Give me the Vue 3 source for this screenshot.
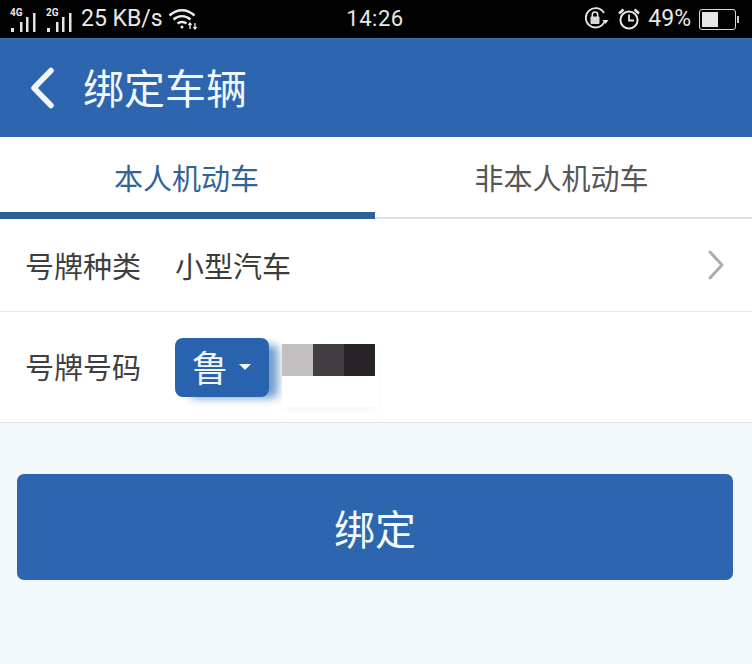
<script setup>
const cells = ['#c2bfc0', '#433e42', '#272326']
</script>

<template>
  <div class="page">
    <div class="status">
      <div class="st-left">
        <svg class="signal" width="26" height="26" viewBox="0 0 26 26">
          <text x="0" y="9" class="tiny">4G</text>
          <g fill="#e4e4e4">
            <rect x="1" y="21" width="3" height="4" />
            <rect x="10" y="15" width="2.500" height="10" />
            <rect x="16" y="10" width="2.500" height="15" />
            <rect x="23" y="6" width="2.500" height="19" />
          </g>
        </svg>
        <svg class="signal" width="26" height="26" viewBox="0 0 26 26">
          <text x="0" y="9" class="tiny">2G</text>
          <g fill="#e4e4e4">
            <rect x="1" y="21" width="3" height="4" />
            <rect x="10" y="15" width="2.500" height="10" />
            <rect x="16" y="10" width="2.500" height="15" />
            <rect x="23" y="6" width="2.500" height="19" />
          </g>
        </svg>
        <span class="speed">25 KB/s</span>
        <svg width="30" height="22" viewBox="0 0 30 22" fill="none" stroke="#ededed" stroke-width="2.400">
          <path d="M1.500 7.500C9 .5 19 .5 26.500 7.500" />
          <path d="M5.500 11.500C10.500 7 17.500 7 22.500 11.500" />
          <path d="M9.500 15.500C12 13.500 16 13.500 18.500 15.500" />
          <circle cx="14" cy="19" r="1.500" fill="#ededed" stroke="none" />
          <path d="M22 21v-6M20.500 17l1.500-2 1.500 2M27 15v6M25.500 19l1.500 2 1.500-2" stroke-width="1.300" />
        </svg>
      </div>
      <div class="clock">14:26</div>
      <div class="st-right">
        <svg width="26" height="24" viewBox="0 0 26 24" fill="none" stroke="#e8e8e8" stroke-width="1.800">
          <path d="M20.500 14.500A9.700 9.700 0 1 1 20 6" />
          <path d="M18.500 13h6l-3 4z" fill="#e8e8e8" stroke="none" />
          <rect x="6.500" y="9.500" width="9" height="7.500" rx="1" fill="#d8d8d8" stroke="none" />
          <path d="M8.300 10V7.800a2.700 2.700 0 0 1 5.400 0V10" stroke-width="1.500" />
        </svg>
        <svg width="24" height="24" viewBox="0 0 24 24" fill="none" stroke="#e8e8e8" stroke-width="2">
          <circle cx="12" cy="13" r="8.600" />
          <path d="M12 7.500V13.500H17" stroke-width="1.800" />
          <path d="M2 6.500 6.500 2.500M22 6.500 17.500 2.500" stroke-width="2.600" />
        </svg>
        <span class="pct">49%</span>
        <div class="battery">
          <div class="battery-body"><div class="battery-fill"></div></div>
          <div class="battery-tip"></div>
        </div>
      </div>
    </div>

    <header class="nav">
      <svg class="back" width="26" height="42" viewBox="0 0 26 42" fill="none">
        <path d="M22 3.500 5 21 22 38.500" stroke="#f1f7fb" stroke-width="5.500" stroke-linecap="round" stroke-linejoin="round" />
      </svg>
      <h1 class="title">绑定车辆</h1>
    </header>

    <div class="tabs">
      <div class="tab active">本人机动车</div>
      <div class="tab other">非本人机动车</div>
    </div>

    <section class="form">
      <div class="row row-type">
        <span class="label">号牌种类</span>
        <span class="value">小型汽车</span>
        <svg class="chev" width="18" height="30" viewBox="0 0 18 30" fill="none">
          <path d="M3 2 15 15 3 28" stroke="#a9adb0" stroke-width="3" stroke-linecap="round" stroke-linejoin="round" />
        </svg>
      </div>
      <div class="row row-plate">
        <span class="label plate-label">号牌号码</span>
        <div class="plate-field">
          <div class="province">
            <span class="province-name">鲁</span>
            <span class="caret"></span>
          </div>
          <div class="mosaic">
            <div class="cells">
              <div v-for="c in cells" :key="c" class="cell" :style="{ background: c }"></div>
            </div>
          </div>
        </div>
      </div>
    </section>

    <div class="action">
      <button class="submit">绑定</button>
    </div>
  </div>
</template>

<style>
html, body { margin: 0; background: #f3f8fa; }
</style>

<style scoped>
.page {
  width: 752px;
  height: 664px;
  overflow: hidden;
  background: #f3f8fa;
  font-family: "Noto Sans CJK SC", "Noto Sans", sans-serif;
}
.status {
  height: 38px;
  background: #020202;
  color: #e8e8e8;
  display: grid;
  grid-template-columns: 1fr auto 1fr;
  align-items: center;
  font-family: Roboto, "Noto Sans", sans-serif;
}
.st-left { display: flex; align-items: center; padding-left: 10px; gap: 10px; }
.signal { margin-top: 1px; }
.tiny { font: 700 10px Roboto, sans-serif; fill: #e8e8e8; }
.speed { font-size: 23px; line-height: 38px; margin: 0 -5px 0 -1px; }
.clock { font-size: 22px; line-height: 38px; letter-spacing: 0.5px; padding-right: 2px; }
.st-right { display: flex; align-items: center; justify-content: flex-end; padding-right: 13px; gap: 7px; }
.pct { font-size: 23px; line-height: 38px; }
.battery { display: flex; align-items: center; gap: 1px; margin-left: 1px; }
.battery-body {
  width: 31px;
  height: 15px;
  padding: 2px;
  border: 1.5px solid #d8d8d8;
  border-radius: 3px;
}
.battery-fill { width: 52%; height: 100%; background: #e6e6e6; }
.battery-tip { width: 2px; height: 7px; background: #c8c8c8; }

.nav {
  height: 99px;
  background: #2d66ae;
  border-top: 1px solid #3f6ea9;
  box-sizing: border-box;
  display: flex;
  align-items: center;
  padding-left: 29px;
  gap: 28px;
}
.title {
  margin: 0 0 4px;
  font-size: 41px;
  line-height: 1;
  font-weight: 400;
  color: #f1f8fc;
}

.tabs {
  height: 82px;
  display: grid;
  grid-template-columns: 375px 1fr;
  background: #fff;
}
.tab {
  display: flex;
  align-items: center;
  justify-content: center;
  font-size: 29px;
  line-height: 1;
  color: #575757;
  border-bottom: 2px solid #dfe2e3;
}
.other { padding-right: 4px; }
.active {
  color: #2f6496;
  border-bottom: 7px solid #2e6096;
  padding: 5px 2px 0 0;
}

.form {
  background: #fff;
  border-bottom: 1px solid #dbe5e8;
}
.row { display: flex; align-items: center; padding: 0 27px 0 25px; }
.row-type { height: 92px; border-bottom: 1px solid #e6e8e9; }
.row-plate { height: 110px; }
.label { width: 150px; font-size: 29px; line-height: 1; color: #3f3f3f; }
.plate-label { margin-bottom: 2px; }
.value { flex: 1; font-size: 29px; line-height: 1; color: #3b3b3b; }
.plate-field { position: relative; display: flex; align-items: flex-start; }
.province {
  width: 94px;
  height: 59px;
  box-sizing: border-box;
  background: #2963ae;
  border-radius: 8px;
  display: flex;
  align-items: center;
  padding-left: 17px;
  gap: 11px;
  box-shadow: 12px 4px 8px -3px rgba(70, 125, 190, 0.75);
  color: #f1f8fc;
}
.province-name { font-size: 36px; line-height: 1; margin-bottom: 3px; }
.caret {
  width: 0;
  height: 0;
  border-left: 6px solid transparent;
  border-right: 6px solid transparent;
  border-top: 6px solid #f1f8fc;
}
.mosaic {
  position: absolute;
  left: 107px;
  top: 6px;
  width: 96px;
  height: 63px;
  background: #fff;
  box-shadow: 0 3px 6px rgba(225, 232, 236, 0.35);
}
.cells { display: flex; }
.cell { width: 31px; height: 32px; }

.action { padding: 51px 19px 0 17px; }
.submit {
  display: block;
  width: 100%;
  height: 106px;
  border: 0;
  border-radius: 7px;
  background: #2d66ae;
  color: #f3f9fc;
  font-family: inherit;
  font-size: 41px;
  line-height: 1;
}
</style>
